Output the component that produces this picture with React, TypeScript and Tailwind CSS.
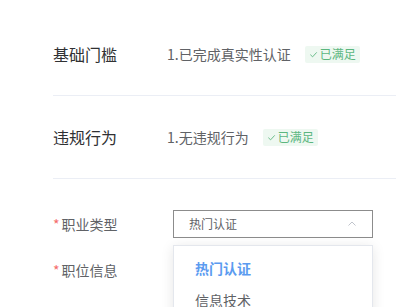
import React from "react";

function Badge() {
  return (
    <span className="ml-[14px] inline-flex h-[17px] items-center gap-[2px] rounded-[2px] bg-[#eef8f1] px-[4px] text-[12px] leading-none text-[#5bb67f]">
      <svg width="9" height="9" viewBox="0 0 10 10" fill="none">
        <path d="M1.5 5.2 L4 7.6 L8.6 2.6" stroke="#5bb67f" strokeWidth="1" />
      </svg>
      已满足
    </span>
  );
}

function InfoRow({ label, value }: { label: string; value: string }) {
  return (
    <div className="flex h-[83px] items-center border-b border-[#ebeef5]">
      <div className="w-[114px] text-[16px] text-[#303133]">{label}</div>
      <div className="flex items-center text-[14px] text-[#606266]">
        {value}
        <Badge />
      </div>
    </div>
  );
}

export default function App() {
  return (
    <div
      className="h-[307px] w-[396px] overflow-hidden bg-white pl-[53px]"
      style={{ fontFamily: '"Noto Sans CJK SC", "Noto Sans", sans-serif' }}
    >
      <div className="pt-[13px]">
        <InfoRow label="基础门槛" value="1.已完成真实性认证" />
        <InfoRow label="违规行为" value="1.无违规行为" />
      </div>
      <div className="pt-[31px]">
        <div className="flex items-center">
          <div className="w-[120px] text-[14px] text-[#606266]">
            <span className="mr-[2px] text-[#f56c6c]">*</span>职业类型
          </div>
          <div className="relative">
            <div className="flex h-[28px] w-[200px] items-center justify-between border border-[#8c8c8c] px-[15px] text-[12px] text-[#606266]">
              <span>热门认证</span>
              <svg width="10" height="10" viewBox="0 0 10 10" fill="none">
                <path d="M1.5 6.5 L5 3 L8.5 6.5" stroke="#c0c4cc" strokeWidth="1" />
              </svg>
            </div>
            <div className="absolute left-0 top-[35px] z-10 w-[200px] border border-[#e4e7ed] bg-white pt-[6px] shadow-[0_2px_12px_0_rgba(0,0,0,0.1)]">
              <div className="flex h-[32px] items-center px-[21px] text-[14px] font-bold text-[#5b9bf0]">热门认证</div>
              <div className="flex h-[32px] items-center px-[21px] text-[14px] text-[#606266]">信息技术</div>
              <div className="flex h-[32px] items-center px-[21px] text-[14px] text-[#606266]">金融财会</div>
            </div>
          </div>
        </div>
        <div className="mt-[18px] flex h-[28px] items-center">
          <div className="w-[120px] text-[14px] text-[#606266]">
            <span className="mr-[2px] text-[#f56c6c]">*</span>职位信息
          </div>
        </div>
      </div>
    </div>
  );
}
